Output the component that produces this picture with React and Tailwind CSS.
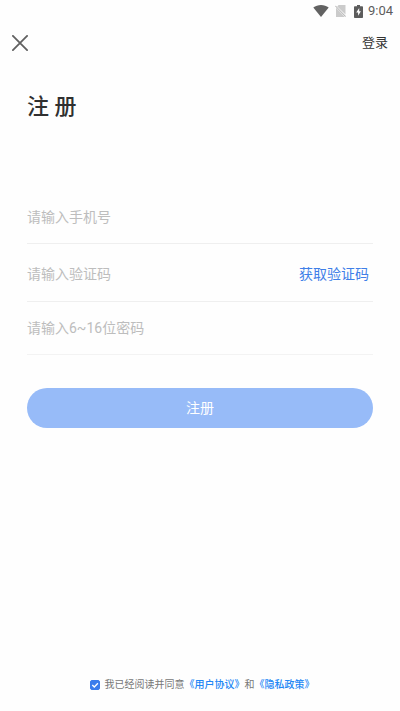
import { useState } from "react";

function StatusBar() {
  return (
    <div className="flex h-[22px] items-center justify-end pr-[7px] text-[#5c5c5c]">
      <svg className="mr-[6px] h-3 w-4" viewBox="0 0 16 12" aria-hidden="true">
        <path d="M8 12 0.3 2.6C2.5.9 5.1 0 8 0s5.500.9 7.700 2.600z" fill="#626262" />
      </svg>
      <svg className="mr-2 h-3 w-[11px]" viewBox="0 0 11 12" aria-hidden="true">
        <path d="M3.600 0H10.500V9.600L2.200 1.400z" fill="#cbcbcb" />
        <path d="M1 2.800 10 12H1z" fill="#cbcbcb" />
        <path d="M0.300 0.800 10.800 11.600" stroke="#a8a8a8" strokeWidth="1" />
      </svg>
      <svg className="mr-[5px] h-[13px] w-[9px]" viewBox="0 0 9 13" aria-hidden="true">
        <path d="M3 0H6V1.300H8.200Q9 1.300 9 2.100V12.200Q9 13 8.200 13H.8Q0 13 0 12.200V2.100Q0 1.300.8 1.300H3z" fill="#5c5c5c" />
        <path d="M5.200 3 2.200 7.600H4.100V10.800L6.900 6.300H5.200z" fill="#ffffff" />
      </svg>
      <span className="text-[13px] leading-4">9:04</span>
    </div>
  );
}

const inputClass =
  "h-6 w-full min-w-0 flex-1 bg-transparent text-[14px] leading-6 text-[#333333] outline-none placeholder:text-[#bdbdbd]";

export default function App() {
  const [agreed, setAgreed] = useState(true);

  return (
    <div className="flex min-h-screen flex-col bg-[#fefefe] font-[Roboto,'Noto_Sans_CJK_SC',sans-serif]">
      <StatusBar />
      <header className="flex h-[42px] items-center justify-between px-3">
        <button type="button" aria-label="关闭">
          <svg className="h-4 w-4" viewBox="0 0 16 16" fill="none" stroke="#606060" strokeWidth="1.800" strokeLinecap="round" aria-hidden="true">
            <path d="M0.900.9 15.100 15.100M15.100.9.9 15.100" />
          </svg>
        </button>
        <a href="#login" className="text-[13px] leading-5 text-[#333333]">登录</a>
      </header>

      <main className="px-[27px] pt-[27px]">
        <h1 className="text-[22px] leading-8 font-medium text-[#303030]">注 册</h1>
        <form className="pt-[68px]" onSubmit={(e) => e.preventDefault()}>
          <div className="flex h-[53px] items-center border-b border-[#efefef]">
            <input className={inputClass} type="tel" aria-label="手机号" placeholder="请输入手机号" />
          </div>
          <div className="flex h-[58px] items-center border-b border-[#efefef] pt-[2px] pr-1">
            <input className={inputClass} type="text" aria-label="验证码" placeholder="请输入验证码" />
            <button type="button" className="shrink-0 text-[14px] leading-6 text-[#3f7fe8]">获取验证码</button>
          </div>
          <div className="flex h-[53px] items-center border-b border-[#f3f3f3]">
            <input className={inputClass} type="password" aria-label="密码" placeholder="请输入6~16位密码" />
          </div>
          <button type="submit" className="mt-[33px] h-10 w-full rounded-full bg-[#97bbf8] text-[14px] leading-6 text-white">注册</button>
        </form>
      </main>

      <footer className="mt-auto flex items-center justify-center gap-[5px] pt-6 pb-[18px] pl-1 text-[10px] leading-4 text-[#777777]">
        <span className="grid h-[10px] w-[10px]">
          <input
            id="agree"
            type="checkbox"
            aria-label="我已经阅读并同意"
            checked={agreed}
            onChange={(e) => setAgreed(e.target.checked)}
            className="col-start-1 row-start-1 h-[10px] w-[10px] appearance-none rounded-[2px] border border-[#3b7cec] checked:bg-[#3b7cec]"
          />
          {agreed && (
            <svg className="pointer-events-none col-start-1 row-start-1 h-[10px] w-[10px]" viewBox="0 0 10 10" fill="none" stroke="#ffffff" strokeWidth="1.300" aria-hidden="true">
              <path d="M2.300 5 4.300 7 7.900 3.300" />
            </svg>
          )}
        </span>
        <p>
          <label htmlFor="agree">我已经阅读并同意</label>
          <a href="#terms" className="font-medium text-[#2186f5]">《用户协议》</a>和<a href="#privacy" className="font-medium text-[#2186f5]">《隐私政策》</a>
        </p>
      </footer>
    </div>
  );
}
